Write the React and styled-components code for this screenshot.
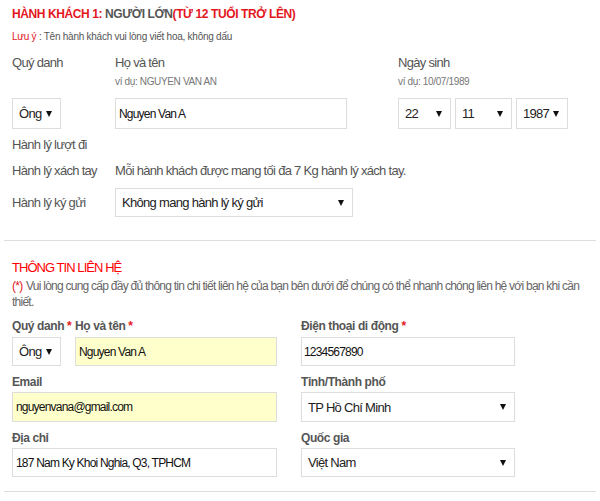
import React from 'react';
import styled, { createGlobalStyle } from 'styled-components';

const GlobalStyle = createGlobalStyle`
  body {
    margin: 0;
    background: #fff;
    font-family: "Liberation Sans", Arial, sans-serif;
    color: #555;
  }
`;

const Page = styled.div`
  padding: 0 4px;
`;

const Section = styled.section`
  padding: 0 8px ${props => props.bottom}px;
  border-bottom: 1px solid #ddd;
`;

const Title = styled.h2`
  margin: 5px 0 0;
  font-size: 12px;
  line-height: 18px;
  font-weight: 700;
  letter-spacing: -0.4px;
  color: #e4171e;
`;

const Muted = styled.span`
  color: #555;
`;

const Note = styled.div`
  margin-top: 7px;
  font-size: 10px;
  line-height: 14px;
  letter-spacing: -0.25px;
  color: #555;
`;

const Red = styled.span`
  color: #e4171e;
  margin-right: ${props => (props.gap ? 1 : 0)}px;
`;

const NameGrid = styled.div`
  display: grid;
  grid-template-columns: 103px 283px auto;
  margin-top: 11px;
`;

const Field = styled.div`
  display: flex;
  flex-direction: column;
  flex: ${props => (props.grow ? 1 : 'none')};
  width: ${props => (props.w ? `${props.w}px` : 'auto')};
`;

const Label = styled.div`
  font-size: ${props => (props.strong ? 12 : 13)}px;
  line-height: 16px;
  letter-spacing: ${props => (props.strong ? -0.4 : -0.7)}px;
  color: #555;
  font-weight: ${props => (props.strong ? 700 : 400)};
  white-space: nowrap;
`;

const Hint = styled.div`
  margin-top: 4px;
  height: 14px;
  font-size: 10px;
  line-height: 14px;
  letter-spacing: -0.35px;
  color: #777;
`;

const Controls = styled.div`
  display: flex;
  gap: 4px;
  margin-top: ${props => props.top}px;
`;

const SelectBox = styled.div`
  box-sizing: border-box;
  display: flex;
  align-items: center;
  justify-content: space-between;
  width: ${props => props.w}px;
  height: ${props => props.h}px;
  padding: 0 8px 0 6px;
  border: 1px solid #ddd;
  background: #fff;
  font-size: 13px;
  letter-spacing: -0.7px;
  color: #222;
`;

const Arrow = styled.span`
  width: 0;
  height: 0;
  border-left: 3px solid transparent;
  border-right: 3px solid transparent;
  border-top: 6px solid #111;
`;

const TextInput = styled.input`
  box-sizing: border-box;
  width: ${props => (props.w ? `${props.w}px` : '100%')};
  height: ${props => props.h}px;
  padding: 0 ${props => props.pad || 3}px;
  border: 1px solid #ddd;
  background: ${props => (props.filled ? '#ffffcc' : '#fff')};
  font-family: inherit;
  font-size: 12px;
  letter-spacing: -0.8px;
  color: #111;
  outline: none;
  flex: ${props => (props.w ? 'none' : 1)};
  min-width: 0;
`;

const BagRow = styled.div`
  display: grid;
  grid-template-columns: 103px auto;
  align-items: center;
  margin-top: ${props => props.top}px;
  font-size: 13px;
  line-height: 16px;
  letter-spacing: -0.7px;
`;

const Heading = styled.h3`
  margin: 18px 0 0;
  font-size: 13px;
  line-height: 18px;
  font-weight: 400;
  letter-spacing: -0.95px;
  color: #f00;
`;

const Desc = styled.p`
  margin: 1px -6px 0 0;
  font-size: 12px;
  line-height: 16px;
  letter-spacing: -0.75px;
  color: #666;
`;

const ContactGrid = styled.div`
  display: grid;
  grid-template-columns: 265px 214px;
  column-gap: 24px;
  row-gap: 8px;
  margin-top: 8px;
`;

const Pair = styled.div`
  display: flex;
  gap: 14px;
`;

const Star = styled.span`
  color: #e4171e;
`;

const Select = ({ value, w, h }) => (
  <SelectBox w={w} h={h}>
    <span>{value}</span>
    <Arrow />
  </SelectBox>
);

export default function App() {
  return (
    <Page>
      <GlobalStyle />
      <Section bottom={23}>
        <Title>
          HÀNH KHÁCH 1: <Muted>NGƯỜI LỚN</Muted>(TỪ 12 TUỔI TRỞ LÊN)
        </Title>
        <Note>
          <Red>Lưu ý</Red> : Tên hành khách vui lòng viết hoa, không dấu
        </Note>

        <NameGrid>
          <Field>
            <Label>Quý danh</Label>
            <Hint />
            <Controls top={9}>
              <Select value="Ông" w={49} h={31} />
            </Controls>
          </Field>
          <Field>
            <Label>Họ và tên</Label>
            <Hint>ví dụ: NGUYEN VAN AN</Hint>
            <Controls top={9}>
              <TextInput w={232} h={31} defaultValue="Nguyen Van A" />
            </Controls>
          </Field>
          <Field>
            <Label>Ngày sinh</Label>
            <Hint>ví dụ: 10/07/1989</Hint>
            <Controls top={9}>
              <Select value="22" w={53} h={31} />
              <Select value="11" w={57} h={31} />
              <Select value="1987" w={52} h={31} />
            </Controls>
          </Field>
        </NameGrid>

        <BagRow top={8}>
          <span>Hành lý lượt đi</span>
        </BagRow>
        <BagRow top={10}>
          <span>Hành lý xách tay</span>
          <span>Mỗi hành khách được mang tối đa 7 Kg hành lý xách tay.</span>
        </BagRow>
        <BagRow top={9}>
          <span>Hành lý ký gửi</span>
          <Select value="Không mang hành lý ký gửi" w={238} h={29} />
        </BagRow>
      </Section>

      <Section bottom={14}>
        <Heading>THÔNG TIN LIÊN HỆ</Heading>
        <Desc>
          <Red gap>(*)</Red> Vui lòng cung cấp đầy đủ thông tin chi tiết liên hệ của bạn bên dưới để chúng có thể nhanh chóng liên hệ với bạn khi cần thiết.
        </Desc>

        <ContactGrid>
          <Pair>
            <Field w={49}>
              <Label strong>Quý danh <Star>*</Star></Label>
              <Controls top={3}>
                <Select value="Ông" w={49} h={29} />
              </Controls>
            </Field>
            <Field grow>
              <Label strong>Họ và tên <Star>*</Star></Label>
              <Controls top={3}>
                <TextInput h={29} filled defaultValue="Nguyen Van A" />
              </Controls>
            </Field>
          </Pair>
          <Field>
            <Label strong>Điện thoại di động <Star>*</Star></Label>
            <Controls top={3}>
              <TextInput h={29} pad={2} defaultValue="1234567890" />
            </Controls>
          </Field>

          <Field>
            <Label strong>Email</Label>
            <Controls top={2}>
              <TextInput h={30} filled defaultValue="nguyenvana@gmail.com" />
            </Controls>
          </Field>
          <Field>
            <Label strong>Tỉnh/Thành phố</Label>
            <Controls top={2}>
              <Select value="TP Hồ Chí Minh" w={214} h={30} />
            </Controls>
          </Field>

          <Field>
            <Label strong>Địa chỉ</Label>
            <Controls top={2}>
              <TextInput h={29} defaultValue="187 Nam Ky Khoi Nghia, Q3, TPHCM" />
            </Controls>
          </Field>
          <Field>
            <Label strong>Quốc gia</Label>
            <Controls top={2}>
              <Select value="Việt Nam" w={214} h={29} />
            </Controls>
          </Field>
        </ContactGrid>
      </Section>
    </Page>
  );
}
